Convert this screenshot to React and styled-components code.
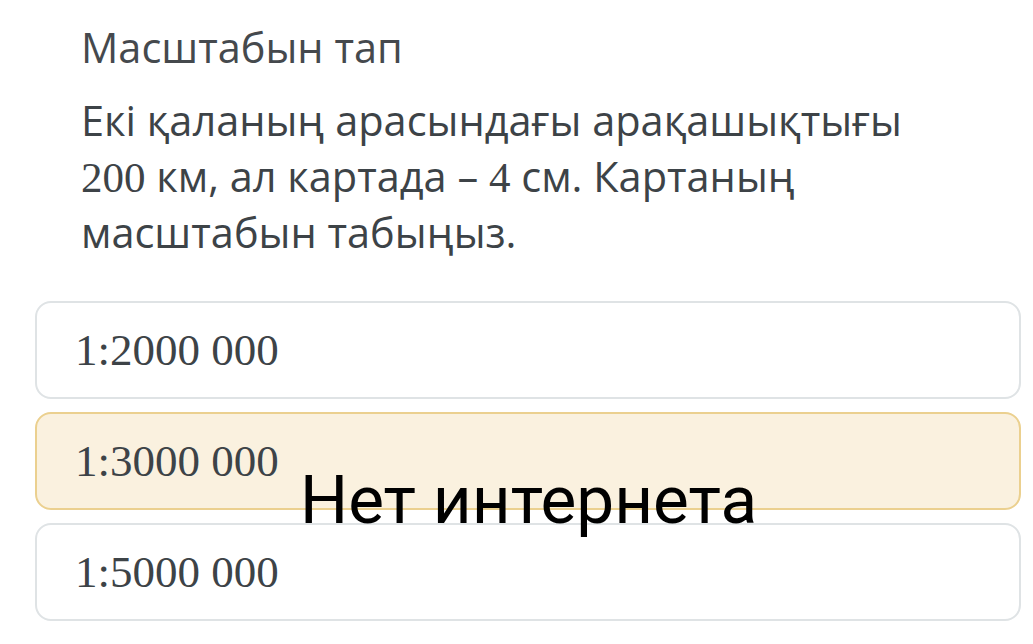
import styled, { createGlobalStyle } from 'styled-components'

const GlobalStyle = createGlobalStyle`
body {
  margin: 0;
  background: #ffffff;
  font-family: "Open Sans", "Noto Sans", sans-serif;
}
`

const Page = styled.main`
position: relative;
width: 1033px;
height: 644px;
overflow: hidden;
padding: 19px 12px 0 35px;
box-sizing: border-box;
`

const Question = styled.section`
padding-left: 46px;
color: #3d4347;
`

const Title = styled.h2`
margin: 0;
font-size: 41.5px;
font-weight: 400;
line-height: 56px;
color: #45494d;
`

const Text = styled.p`
margin: 18px 0 0;
font-size: 41.5px;
line-height: 55.5px;
max-width: 880px;
`

const Num = styled.span`
font-family: "Liberation Serif", serif;
font-size: 43px;
`

const Options = styled.div`
display: flex;
flex-direction: column;
gap: 13px;
margin-top: 40px;
`

const Option = styled.div`
height: 98px;
box-sizing: border-box;
display: flex;
align-items: center;
padding: 0 38px;
border: 2px solid ${p => (p.selected ? '#ebd08f' : '#dfe3e5')};
background: ${p => (p.selected ? '#faf1df' : '#ffffff')};
border-radius: 16px;
font-family: "Liberation Serif", serif;
font-size: 45px;
color: #3d4347;
`

const Toast = styled.div`
position: absolute;
left: 300px;
top: 462px;
font-family: Roboto, "Noto Sans", sans-serif;
font-size: 67.5px;
color: #000000;
line-height: 76px;
`

const options = ['1:2000 000', '1:3000 000', '1:5000 000']

const App = () => {
  return (
    <Page>
      <GlobalStyle />
      <Question>
        <Title>Масштабын тап</Title>
        <Text>
          Екі қаланың арасындағы арақашықтығы <Num>200</Num> км, ал картада – <Num>4</Num> см. Картаның масштабын табыңыз.
        </Text>
      </Question>
      <Options>
        {options.map((o, i) => (
          <Option key={o} selected={i === 1}>{o}</Option>
        ))}
      </Options>
      <Toast>Нет интернета</Toast>
    </Page>
  )
}

export default App
